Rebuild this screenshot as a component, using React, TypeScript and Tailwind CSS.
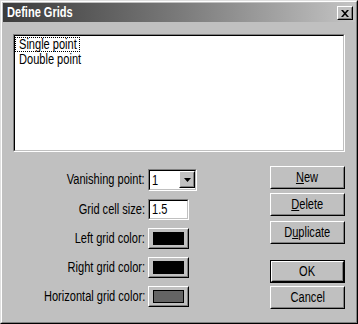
import React from "react";

const font = "font-['Liberation_Sans',Arial,sans-serif]";

// the dialog's font is narrow: squeeze Arial-sized glyphs horizontally
const T = ({ children, o = "origin-center" }: { children: React.ReactNode; o?: string }) => (
  <span className={`inline-block whitespace-nowrap scale-x-[0.79] ${o}`}>{children}</span>
);

const Raised = ({ className = "", children }: { className?: string; children?: React.ReactNode }) => (
  <div className={`border border-t-white border-l-white border-r-black border-b-black bg-[#c0c0c0] ${className}`}>
    <div className="flex h-full w-full items-center justify-center border border-t-[#c0c0c0] border-l-[#c0c0c0] border-r-[#808080] border-b-[#808080]">
      {children}
    </div>
  </div>
);

const Sunken = ({ className = "", children }: { className?: string; children?: React.ReactNode }) => (
  <div className={`border border-t-[#808080] border-l-[#808080] border-r-white border-b-white ${className}`}>
    <div className="h-full w-full border border-t-black border-l-black border-r-[#c0c0c0] border-b-[#c0c0c0] bg-white">
      {children}
    </div>
  </div>
);

const Btn = ({ children, isDefault }: { children: React.ReactNode; isDefault?: boolean }) =>
  isDefault ? (
    <div className="h-[23px] w-[75px] border border-black">
      <Raised className="h-full w-full">
        <T>{children}</T>
      </Raised>
    </div>
  ) : (
    <Raised className="h-[23px] w-[75px]">
      <T>{children}</T>
    </Raised>
  );

const Swatch = ({ color }: { color: string }) => (
  <Raised className="h-[21px] w-[41px]">
    <div className={`h-[13px] w-[31px] border border-black ${color}`} />
  </Raised>
);

const rows: { label: string; control: React.ReactNode }[] = [
  {
    label: "Vanishing point:",
    control: (
      <Sunken className="h-[22px] w-[49px]">
        <div className="flex h-full items-center justify-between">
          <span className="pl-[2px] leading-none">
            <T o="origin-left">1</T>
          </span>
          <Raised className="h-[17px] w-[16px]">
            <svg width="7" height="4" viewBox="0 0 7 4">
              <path d="M0 0h7L3.5 4z" fill="black" />
            </svg>
          </Raised>
        </div>
      </Sunken>
    ),
  },
  {
    label: "Grid cell size:",
    control: (
      <Sunken className="h-[21px] w-[41px]">
        <div className="flex h-full items-center pl-[2px] leading-none">
          <T o="origin-left">1.5</T>
        </div>
      </Sunken>
    ),
  },
  { label: "Left grid color:", control: <Swatch color="bg-black" /> },
  { label: "Right grid color:", control: <Swatch color="bg-black" /> },
  { label: "Horizontal grid color:", control: <Swatch color="bg-[#646464]" /> },
];

export default function App() {
  return (
    <div className={`h-[324px] w-[358px] border border-t-[#dfdfdf] border-l-[#dfdfdf] border-r-black border-b-black bg-[#c0c0c0] ${font} text-[14px] text-black`}>
      <div className="flex h-full w-full flex-col border border-t-white border-l-white border-r-[#808080] border-b-[#808080] p-[1px]">
        <div className="flex h-[19px] items-center justify-between bg-linear-to-r from-[#3c3c3c] via-[#7a7a7a] to-[#c4c4c4] pl-[4px] pr-[2px]">
          <span className="text-[14px] font-bold text-white">
            <T o="origin-left">Define Grids</T>
          </span>
          <Raised className="mt-[1px] h-[14px] w-[16px]">
            <svg width="8" height="7" viewBox="0 0 8 7">
              <path d="M0 0h2l2 2.2L6 0h2L5 3.5 8 7H6L4 4.8 2 7H0l3-3.5z" fill="black" />
            </svg>
          </Raised>
        </div>

        <div className="mx-[10px] mt-[12px] flex flex-col">
          <Sunken className="h-[118px] w-full">
            <div className="flex flex-col pt-[1px] leading-[13px]">
              <div>
                <span className="inline-block w-[65px] border border-dotted border-black px-[3px]">
                  <T o="origin-left">Single point</T>
                </span>
              </div>
              <div>
                <span className="inline-block border border-transparent px-[3px]">
                  <T o="origin-left">Double point</T>
                </span>
              </div>
            </div>
          </Sunken>

          <div className="mt-[14px] flex justify-between">
            <div className="mt-[1px] grid grid-cols-[135px_auto] gap-y-[5px]">
              {rows.map((r) => (
                <React.Fragment key={r.label}>
                  <div className="flex items-center justify-end pr-[3px]">
                    <T o="origin-right">{r.label}</T>
                  </div>
                  <div className="flex items-center">{r.control}</div>
                </React.Fragment>
              ))}
            </div>

            <div className="flex flex-col">
              <Btn>
                <span className="underline underline-offset-1">N</span>ew
              </Btn>
              <div className="mt-[4px]">
                <Btn>
                  <span className="underline underline-offset-1">D</span>elete
                </Btn>
              </div>
              <div className="mt-[5px]">
                <Btn>
                  D<span className="underline underline-offset-1">u</span>plicate
                </Btn>
              </div>
              <div className="mt-[16px]">
                <Btn isDefault>OK</Btn>
              </div>
              <div className="mt-[3px]">
                <Btn>Cancel</Btn>
              </div>
            </div>
          </div>
        </div>
      </div>
    </div>
  );
}
